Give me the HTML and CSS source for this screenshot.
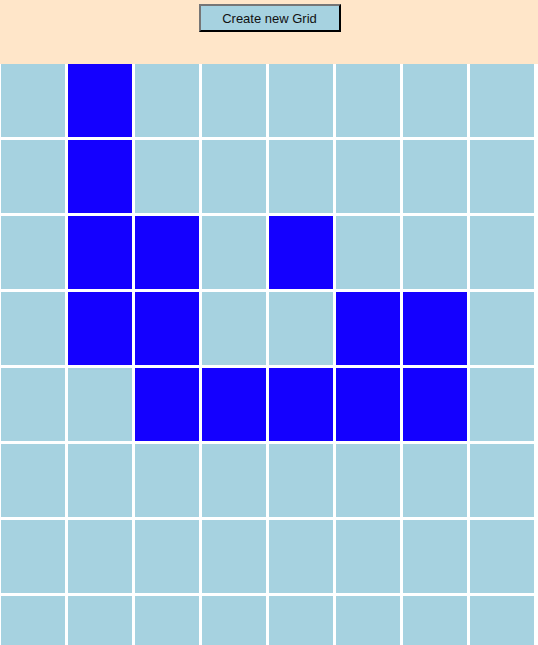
FILE: index.html
```html
<!DOCTYPE html>
<html lang="en">
<head>
	<meta charset="utf-8">
	<meta name="viewport" content="width=device-width, initial-scale=1.0">
	<title>Grid</title>
	<link rel="stylesheet" href="styles.css">
</head>
<body>
	<div class="header">
		<button class="new-grid">Create new Grid</button>
	</div>
	<div class="grid">
		<div class="cell"></div><div class="cell on"></div><div class="cell"></div><div class="cell"></div><div class="cell"></div><div class="cell"></div><div class="cell"></div><div class="cell"></div>
		<div class="cell"></div><div class="cell on"></div><div class="cell"></div><div class="cell"></div><div class="cell"></div><div class="cell"></div><div class="cell"></div><div class="cell"></div>
		<div class="cell"></div><div class="cell on"></div><div class="cell on"></div><div class="cell"></div><div class="cell on"></div><div class="cell"></div><div class="cell"></div><div class="cell"></div>
		<div class="cell"></div><div class="cell on"></div><div class="cell on"></div><div class="cell"></div><div class="cell"></div><div class="cell on"></div><div class="cell on"></div><div class="cell"></div>
		<div class="cell"></div><div class="cell"></div><div class="cell on"></div><div class="cell on"></div><div class="cell on"></div><div class="cell on"></div><div class="cell on"></div><div class="cell"></div>
		<div class="cell"></div><div class="cell"></div><div class="cell"></div><div class="cell"></div><div class="cell"></div><div class="cell"></div><div class="cell"></div><div class="cell"></div>
		<div class="cell"></div><div class="cell"></div><div class="cell"></div><div class="cell"></div><div class="cell"></div><div class="cell"></div><div class="cell"></div><div class="cell"></div>
		<div class="cell"></div><div class="cell"></div><div class="cell"></div><div class="cell"></div><div class="cell"></div><div class="cell"></div><div class="cell"></div><div class="cell"></div>
	</div>
</body>
</html>
```
FILE: styles.css
```css
html {
	overflow: hidden;
}

body {
	margin: 0;
	background-color: white;
	font-family: "Liberation Sans", Arial, sans-serif;
}

.header {
	height: 64px;
	background-color: #ffe6c9;
	display: flex;
	justify-content: center;
	align-items: flex-start;
	padding-top: 4px;
	box-sizing: border-box;
}

.new-grid {
	width: 142px;
	height: 28px;
	margin-left: 1px;
	background-color: #a6d2e0;
	border: 2px outset #222;
	font-family: "Liberation Sans", Arial, sans-serif;
	font-size: 13px;
	color: #111;
	padding: 0;
}

.grid {
	display: grid;
	grid-template-columns: repeat(8, 64px);
	grid-auto-rows: 73px;
	gap: 3px;
	padding-left: 1px;
}

.cell {
	background-color: #a6d2e0;
}

.cell.on {
	background-color: #1400ff;
}
```
